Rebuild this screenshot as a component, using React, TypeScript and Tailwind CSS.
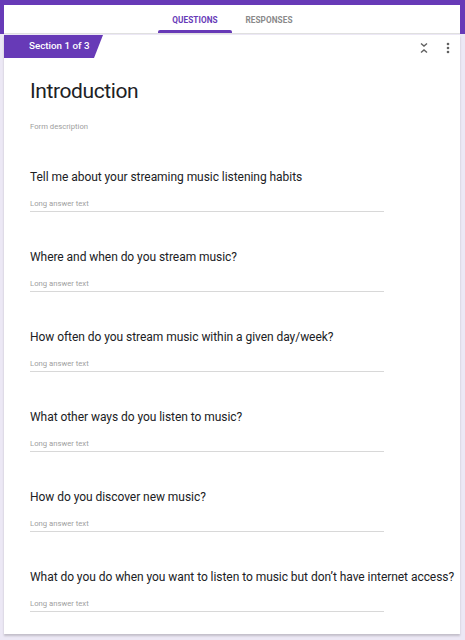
import React from "react";

const questions = [
  "Tell me about your streaming music listening habits",
  "Where and when do you stream music?",
  "How often do you stream music within a given day/week?",
  "What other ways do you listen to music?",
  "How do you discover new music?",
  "What do you do when you want to listen to music but don\u2019t have internet access?",
];

export default function App() {
  return (
    <div className="w-[465px] h-[640px] bg-[#ece8f5] overflow-hidden font-['Roboto',sans-serif]">
      <div className="bg-[#673ab7] pt-[5px] pl-[4px] pr-[5px]">
        <div className="h-[29px] bg-white border-b border-[#e0e0e0] flex justify-center">
          <div className="w-[74px] flex flex-col">
            <div className="flex-1 pt-[5px] flex items-center justify-center text-[8.2px] font-bold text-[#673ab7] tracking-[0.1px]">QUESTIONS</div>
            <div className="h-[3px] bg-[#673ab7] rounded-t-[2px]" />
          </div>
          <div className="w-[74px] flex flex-col">
            <div className="flex-1 pt-[5px] flex items-center justify-center text-[8.2px] font-bold text-[#8a8a8a] tracking-[0.1px]">RESPONSES</div>
            <div className="h-[3px]" />
          </div>
        </div>
      </div>
      <div className="ml-[4px] mr-[5px] mt-px h-[599px] bg-white shadow-[0_2px_2px_rgba(0,0,0,0.18)] relative">
        <div className="flex items-start justify-between">
          <div className="w-[99px] h-[23px] bg-[#673ab7] [clip-path:polygon(0_0,100%_0,calc(100%-9px)_100%,0_100%)] flex items-center pl-[25px] text-white text-[9.8px] font-medium whitespace-nowrap">
            Section 1 of 3
          </div>
          <div className="flex items-center gap-[17px] pr-[10px] pt-[7px]">
            <svg width="10" height="12" viewBox="0 0 10 12" fill="none" stroke="#616161" strokeWidth="1.4">
              <path d="M2 1.5 L5 4 L8 1.5" />
              <path d="M2 10.5 L5 8 L8 10.5" />
            </svg>
            <svg width="4" height="12" viewBox="0 0 4 12" fill="#616161">
              <circle cx="2" cy="2" r="1.3" />
              <circle cx="2" cy="6" r="1.3" />
              <circle cx="2" cy="10" r="1.3" />
            </svg>
          </div>
        </div>
        <div className="pl-[26px] pt-[17px]">
          <div className="text-[21px] leading-[32px] tracking-[-0.4px] text-[#202124]">Introduction</div>
          <div className="mt-[14px] text-[7.7px] leading-[12px] text-[#9e9e9e]">Form description</div>
          <div className="mt-[35px] flex flex-col">
            {questions.map((q, i) => (
              <div key={i} className="h-[80px] flex flex-col">
                <div className="text-[12px] leading-[18px] tracking-[-0.05px] text-[#202124] whitespace-nowrap">{q}</div>
                <div className="mt-[12px] w-[354px] border-b border-[#d8d8d8] pb-[1px] text-[7.7px] leading-[12px] text-[#a0a0a0]">Long answer text</div>
              </div>
            ))}
          </div>
        </div>
      </div>
    </div>
  );
}
